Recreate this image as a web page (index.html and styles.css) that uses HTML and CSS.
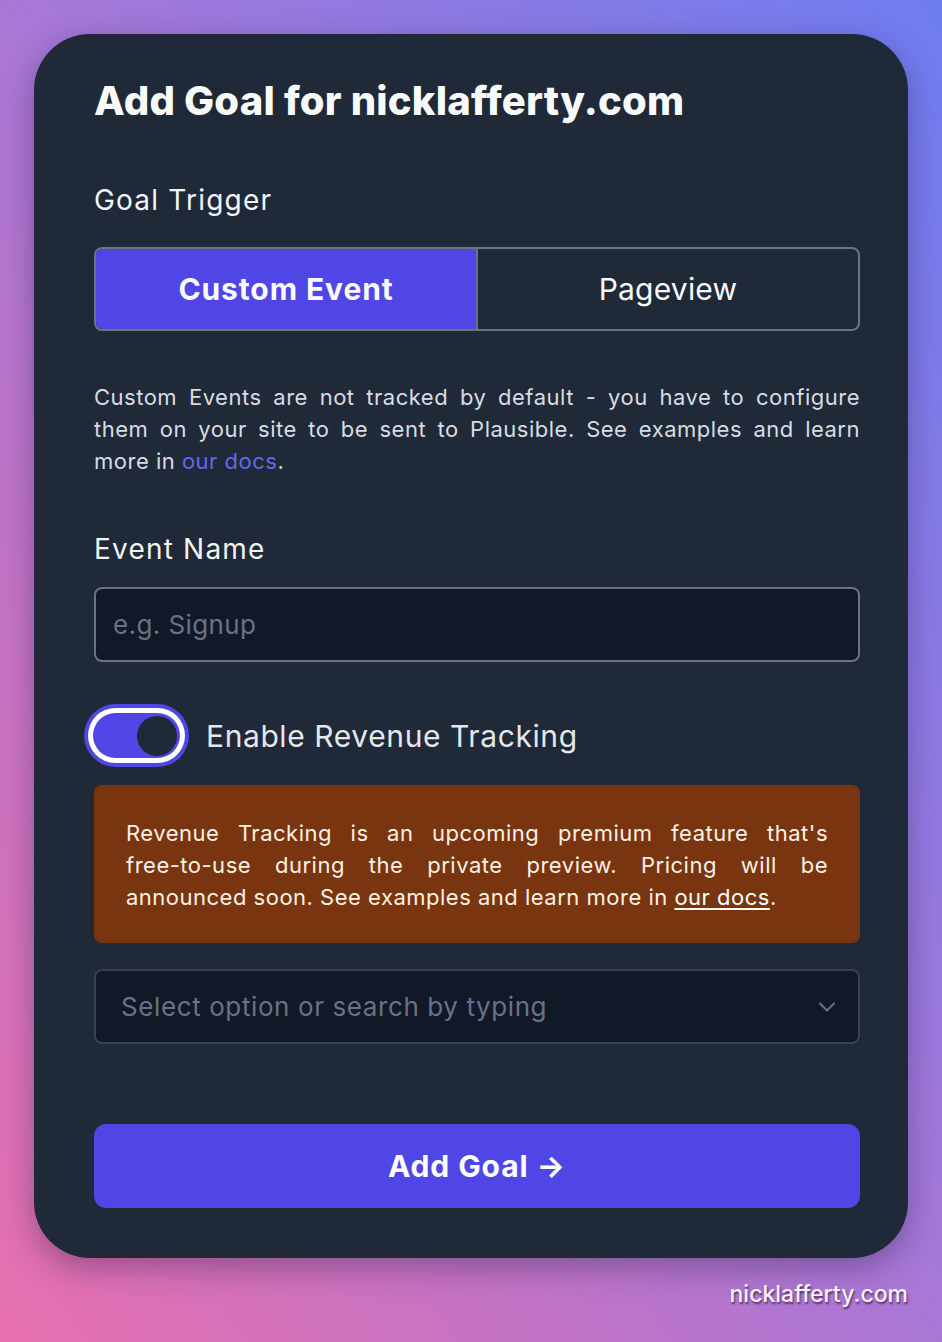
FILE: index.html
```html
<!DOCTYPE html>
<html lang="en">
<head>
    <meta charset="UTF-8">
    <meta name="viewport" content="width=device-width, initial-scale=1.0">
    <title>Add Goal</title>
    <link rel="stylesheet" href="styles.css">
</head>
<body>
    <div class="card">
        <h1 class="title">Add Goal for nicklafferty.com</h1>

        <div class="label trigger-label">Goal Trigger</div>
        <div class="tabs">
            <button class="tab active">Custom Event</button>
            <button class="tab">Pageview</button>
        </div>

        <p class="help">Custom Events are not tracked by default - you have to configure them on your site to be sent to Plausible. See examples and learn more in <a class="link" href="#">our docs</a>.</p>

        <div class="label name-label">Event Name</div>
        <input class="field" type="text" placeholder="e.g. Signup">

        <div class="toggle-row">
            <span class="toggle"><span class="knob"></span></span>
            <span class="toggle-label">Enable Revenue Tracking</span>
        </div>

        <div class="notice">Revenue Tracking is an upcoming premium feature that's <span class="nowrap">free-to-use</span> during the private preview. Pricing will be announced soon. See examples and learn more in <a class="notice-link" href="#">our docs</a>.</div>

        <div class="select">
            <span class="select-text">Select option or search by typing</span>
            <svg class="chevron" width="18" height="10" viewBox="0 0 18 10" fill="none" stroke="#6b7280" stroke-width="2" stroke-linecap="round" stroke-linejoin="round"><path d="M2 1.5l7 7 7-7"/></svg>
        </div>

        <button class="submit">Add Goal <span class="arrow">&rarr;</span></button>
    </div>
    <div class="credit">nicklafferty.com</div>
</body>
</html>
```

FILE: styles.css
```css
body{
    margin: 0;
    width: 942px;
    height: 1342px;
    overflow: hidden;
    font-family: Inter, "Noto Sans", sans-serif;
    background: linear-gradient(to bottom left, #6e7cf0 0%, #a877d6 50%, #e76fae 100%);
    box-sizing: border-box;
    padding: 34px 34px 0 34px;
}
.card{
    width: 874px;
    height: 1224px;
    box-sizing: border-box;
    background: #1f2937;
    border-radius: 56px;
    padding: 47px 48px 0 60px;
    box-shadow: 0 10px 30px rgba(30, 20, 60, 0.35);
    color: #f3f4f6;
}
.title{
    margin: 0;
    font-size: 40px;
    line-height: 40px;
    font-weight: 800;
    letter-spacing: 0.2px;
    color: #f9fafb;
}
.label{
    font-size: 28px;
    line-height: 34px;
    font-weight: 400;
    letter-spacing: 1.2px;
    color: #f3f4f6;
}
.trigger-label{
    margin-top: 62px;
}
.tabs{
    display: flex;
    width: 766px;
    height: 84px;
    box-sizing: border-box;
    margin-top: 30px;
    border: 2px solid #6b7280;
    border-radius: 8px;
    overflow: hidden;
}
.tab{
    flex: 1;
    border: 0;
    background: transparent;
    color: #f9fafb;
    font-family: inherit;
    font-size: 30px;
    font-weight: 400;
    letter-spacing: 0.2px;
    padding: 0;
}
.tab.active{
    background: #4f46e5;
    font-weight: 700;
    letter-spacing: 0.9px;
    border-right: 2px solid #6b7280;
}
.help{
    width: 766px;
    margin: 50px 0 0 0;
    font-size: 22px;
    line-height: 32px;
    text-align: justify;
    color: #d8dce2;
    letter-spacing: 0.5px;
}
.link{
    color: #6366f1;
    text-decoration: none;
}
.name-label{
    margin-top: 55px;
}
.field{
    display: block;
    width: 766px;
    height: 75px;
    box-sizing: border-box;
    margin-top: 21px;
    padding: 0 17px;
    background: #111827;
    border: 2px solid #6b7280;
    border-radius: 8px;
    font-family: inherit;
    font-size: 26px;
    letter-spacing: 0.4px;
    color: #f3f4f6;
}
.field::placeholder{
    color: #6b7280;
}
.toggle-row{
    display: flex;
    align-items: center;
    margin-top: 51px;
    margin-left: -1px;
}
.toggle{
    display: flex;
    justify-content: flex-end;
    align-items: center;
    width: 87px;
    height: 45px;
    box-sizing: border-box;
    padding: 0 3px;
    background: #4f46e5;
    border-radius: 23px;
    box-shadow: 0 0 0 5px #ffffff, 0 0 0 9px #4f46e5;
}
.knob{
    width: 40px;
    height: 40px;
    border-radius: 50%;
    background: #1f2937;
}
.toggle-label{
    margin-left: 26px;
    font-size: 30px;
    letter-spacing: 0.6px;
    color: #e5e7eb;
}
.notice{
    width: 766px;
    box-sizing: border-box;
    margin-top: 27px;
    padding: 32px 32px 30px 32px;
    background: #78350f;
    border-radius: 8px;
    font-size: 22px;
    line-height: 32px;
    text-align: justify;
    color: #fdf1e6;
    letter-spacing: 0.5px;
}
.nowrap{
    white-space: nowrap;
}
.notice-link{
    color: #ffffff;
    text-decoration: underline;
    text-underline-offset: 3px;
}
.select{
    display: flex;
    align-items: center;
    justify-content: space-between;
    width: 766px;
    height: 75px;
    box-sizing: border-box;
    margin-top: 26px;
    padding: 0 22px 0 25px;
    background: #111827;
    border: 2px solid #374151;
    border-radius: 8px;
}
.select-text{
    font-size: 26px;
    letter-spacing: 0.6px;
    color: #6b7280;
}
.submit{
    display: block;
    width: 766px;
    height: 84px;
    margin-top: 80px;
    border: 0;
    border-radius: 12px;
    background: #4f46e5;
    color: #ffffff;
    font-family: inherit;
    font-size: 30px;
    font-weight: 700;
    letter-spacing: 0.9px;
}
.arrow{
    font-weight: 700;
}
.credit{
    width: 874px;
    margin-top: 22px;
    text-align: right;
    font-size: 23px;
    font-weight: 500;
    color: #fbeefb;
    text-shadow: 1px 2px 2px rgba(40, 20, 50, 0.7);
}
```
